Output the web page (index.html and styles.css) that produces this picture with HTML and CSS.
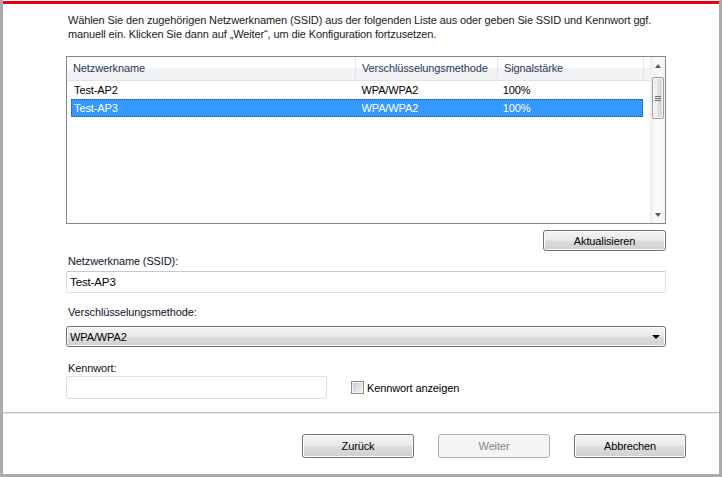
FILE: index.html
```html
<!DOCTYPE html>
<html lang="de">
<head>
<meta charset="utf-8">
<link rel="stylesheet" href="styles.css">
</head>
<body>
<div class="frame">
  <div class="redbar"></div>
  <div class="content">
    <p class="intro">Wählen Sie den zugehörigen Netzwerknamen (SSID) aus der folgenden Liste aus oder geben Sie SSID und Kennwort ggf. manuell ein. Klicken Sie dann auf „Weiter“, um die Konfiguration fortzusetzen.</p>

    <div class="listbox">
      <div class="listmain">
        <div class="lhead">
          <div class="col c1">Netzwerkname</div>
          <div class="col c2">Verschlüsselungsmethode</div>
          <div class="col c3">Signalstärke</div>
          <div class="col c4"></div>
        </div>
        <div class="lrow">
          <div class="col c1">Test-AP2</div>
          <div class="col c2">WPA/WPA2</div>
          <div class="col c3">100%</div>
        </div>
        <div class="lrow sel">
          <div class="col c1">Test-AP3</div>
          <div class="col c2">WPA/WPA2</div>
          <div class="col c3">100%</div>
        </div>
      </div>
      <div class="vscroll">
        <div class="sarrow"><span class="tri up"></span></div>
        <div class="thumb"><span class="grip"></span></div>
        <div class="strack"></div>
        <div class="sarrow"><span class="tri down"></span></div>
      </div>
    </div>

    <div class="refresh-row">
      <button class="btn refresh">Aktualisieren</button>
    </div>

    <label class="lbl lbl-ssid">Netzwerkname (SSID):</label>
    <div class="field ssid">Test-AP3</div>

    <label class="lbl lbl-enc">Verschlüsselungsmethode:</label>
    <div class="combo"><span>WPA/WPA2</span><span class="carrow"></span></div>

    <label class="lbl lbl-pw">Kennwort:</label>
    <div class="pw-row">
      <div class="field pw"></div>
      <div class="check"><span class="box"></span><span>Kennwort anzeigen</span></div>
    </div>
  </div>
  <div class="sep"></div>
  <div class="footer">
    <button class="btn fbtn">Zurück</button>
    <button class="btn fbtn disabled">Weiter</button>
    <button class="btn fbtn">Abbrechen</button>
  </div>
</div>
</body>
</html>
```

FILE: styles.css
```css
* { box-sizing: border-box; }
html, body { margin: 0; padding: 0; background: #fff; }
body {
  font-family: "Liberation Sans", Arial, sans-serif;
  font-size: 11px;
  letter-spacing: -0.12px;
  color: #000;
}
.frame {
  width: 722px;
  height: 477px;
  border-left: 3px solid #ababab;
  border-right: 3px solid #ababab;
  border-bottom: 3px solid #ababab;
  padding-top: 1px;
  display: flex;
  flex-direction: column;
}
.redbar { height: 3px; background: #e60012; }
.content {
  padding: 0 0 0 63px;
  width: 663px;
  display: flex;
  flex-direction: column;
}
.intro {
  margin: 9px 0 0 2px;
  line-height: 14px;
  width: 600px;
  color: #1a1a1a;
}
.listbox {
  margin-top: 15px;
  width: 600px;
  height: 168px;
  border: 1px solid #828790;
  display: flex;
}
.listmain { flex: 1; }
.lhead {
  display: flex;
  height: 24px;
  background: linear-gradient(#ffffff 0%, #ffffff 45%, #f3f4f6 50%, #f1f2f4 100%);
  border-bottom: 1px solid #e2e3e5;
  color: #1e395b;
}
.lhead .col {
  line-height: 23px;
  border-right: 1px solid #e3e5e8;
}
.col { padding-left: 6px; white-space: nowrap; }
.c1 { width: 289px; }
.c2 { width: 142px; }
.c3 { width: 146px; }
.c4 { flex: 1; border-right: none !important; }
.lrow {
  display: flex;
  height: 18px;
  line-height: 17px;
  margin-left: 4px;
  width: 572px;
  border: 1px dotted transparent;
}
.lrow .c1 { width: 285px; padding-left: 2px; }
.lrow.sel {
  background: #3399ff;
  color: #fff;
  border: 1px dotted #1f4e8c;
}
.vscroll {
  width: 18px;
  display: flex;
  flex-direction: column;
  background: linear-gradient(90deg, #f0f0f0, #fcfcfc 40%, #f4f4f4);
  border-left: 1px solid #eeeeee;
}
.sarrow {
  height: 17px;
  display: flex;
  align-items: center;
  justify-content: center;
}
.tri { width: 0; height: 0; border-left: 3.5px solid transparent; border-right: 3.5px solid transparent; }
.tri.up { border-bottom: 4px solid #5a5a5a; }
.tri.down { border-top: 4px solid #5a5a5a; }
.thumb {
  margin: 3px 1px 0 1px;
  height: 42px;
  border: 1px solid #9c9c9c;
  border-radius: 2px;
  background: linear-gradient(90deg, #f2f2f2, #ebebeb 45%, #dcdcdc 55%, #d6d6d6);
  box-shadow: inset 0 0 0 1px #fafafa;
  display: flex;
  align-items: center;
  justify-content: center;
}
.grip {
  width: 6px;
  height: 5px;
  border-top: 1px solid #707070;
  border-bottom: 1px solid #707070;
  position: relative;
}
.grip::after {
  content: "";
  position: absolute;
  left: 0; right: 0; top: 1px;
  border-top: 1px solid #707070;
}
.strack { flex: 1; }
.btn {
  font-family: "Liberation Sans", Arial, sans-serif;
  font-size: 11px;
  letter-spacing: -0.12px;
  color: #000;
  border: 1px solid #707070;
  border-radius: 3px;
  background: linear-gradient(#f2f2f2 0%, #ebebeb 48%, #dddddd 52%, #cfcfcf 100%);
  box-shadow: inset 0 0 0 1px #fcfcfc;
  padding: 0;
}
.refresh-row { display: flex; justify-content: flex-end; width: 600px; margin-top: 6px; }
.refresh { width: 123px; height: 21px; }
.lbl { display: block; line-height: 14px; margin-left: 2px; color: #0f1428; }
.lbl-ssid { margin-top: 3px; }
.field {
  height: 22px;
  border: 1px solid #dbdfe6;
  border-top-color: #abadb3;
  border-radius: 2px;
  background: #fff;
  line-height: 20px;
  padding-left: 3px;
  font-size: 11.5px;
}
.ssid { margin-top: 3px; width: 600px; border-top-color: #c5c9d0; }
.lbl-enc { margin-top: 12px; }
.combo {
  margin-top: 7px;
  width: 600px;
  height: 21px;
  border: 1px solid #707070;
  border-radius: 3px;
  background: linear-gradient(#f2f2f2 0%, #ebebeb 48%, #dddddd 52%, #cfcfcf 100%);
  box-shadow: inset 0 0 0 1px #fcfcfc;
  display: flex;
  align-items: center;
  justify-content: space-between;
  padding: 0 5px 0 3px;
}
.carrow { width: 0; height: 0; border-left: 4px solid transparent; border-right: 4px solid transparent; border-top: 4px solid #000; }
.lbl-pw { margin-top: 14px; }
.pw-row { display: flex; align-items: center; margin-top: 1px; }
.pw { width: 261px; height: 23px; border-top-color: #dbdfe6; }
.check { display: flex; align-items: center; margin-left: 24px; gap: 3px; }
.box {
  width: 13px;
  height: 13px;
  border: 1px solid #8e8f8f;
  background: linear-gradient(135deg, #cbcbcb, #f4f4f4);
  box-shadow: inset 0 0 0 1px #f4f4f4;
}
.sep {
  margin-top: 13px;
  height: 2px;
  border-top: 1px solid #c3c3c3;
  border-bottom: 1px solid #e9e9e9;
}
.footer {
  display: flex;
  padding-left: 299px;
  gap: 24px;
  margin-top: 20px;
}
.fbtn { width: 112px; height: 24px; }
.fbtn.disabled {
  border-color: #adb2b5;
  background: #f4f4f4;
  box-shadow: none;
  color: #838383;
}
```
